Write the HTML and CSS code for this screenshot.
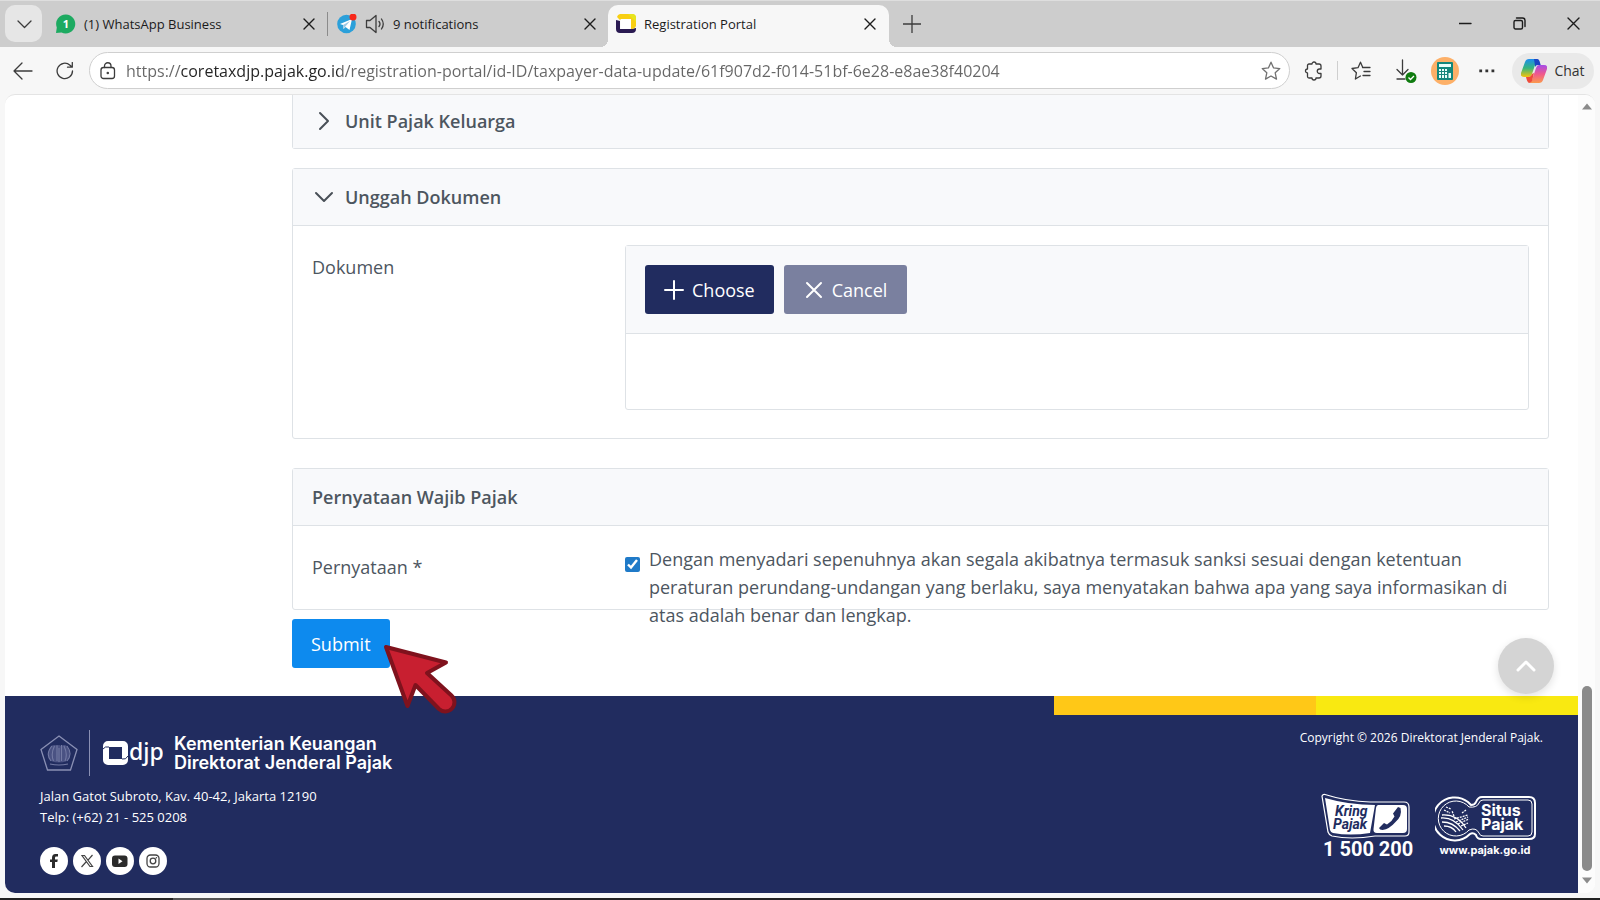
FILE: index.html
```html
<!DOCTYPE html>
<html lang="id">
<head>
<meta charset="utf-8">
<title>Registration Portal</title>
<link rel="stylesheet" href="styles.css">
</head>
<body>
<div class="browser">
  <header class="tabstrip">
    <button class="tab-list" aria-label="Tab actions"><svg width="18" height="18" viewBox="0 0 18 18"><path class="line" d="M3 6l6.500 6.500L16 6"/></svg></button>
    <div class="tab">
      <svg width="20" height="20" viewBox="0 0 20 20"><path fill="#1daa61" d="M10 0.500a9.500 9.500 0 1 1-4.500 18L0 19l.8-5.500A9.500 9.500 0 0 1 10 .5z"/><text x="10" y="14" text-anchor="middle" class="badge-num">1</text></svg>
      <span class="tab-title">(1) WhatsApp Business</span>
      <button class="close" aria-label="Close tab"><svg width="12" height="12" viewBox="0 0 12 12"><path class="line dark" d="M1 1l10 10M11 1L1 11"/></svg></button>
    </div>
    <span class="tab-sep"></span>
    <div class="tab tab-two">
      <svg width="20" height="20" viewBox="0 0 20 20"><circle cx="9.500" cy="10" r="9.300" fill="#2ba0da"/><path fill="#fff" d="M3 10l12-5-2.500 11-4-3-2 2-.5-4z"/><path fill="#9cc8e4" d="M6 11l7-4-5 6-1.500 2z"/><circle cx="16" cy="3" r="3.500" fill="#f7281b"/></svg>
      <svg class="speaker" width="20" height="20" viewBox="0 0 20 20"><path class="line" d="M1.500 6.500h3.500l6-5v17l-6-5H1.500zM14 7.500q2 2.500 0 5M16.500 5q3.500 5 0 10"/></svg>
      <span class="tab-title">9 notifications</span>
      <button class="close" aria-label="Close tab"><svg width="12" height="12" viewBox="0 0 12 12"><path class="line dark" d="M1 1l10 10M11 1L1 11"/></svg></button>
    </div>
    <div class="tab active">
      <svg width="20" height="20" viewBox="0 0 20 20"><path fill="#2a1a52" d="M0 6l4 1v8h11l5-1v1a4 4 0 0 1-4 4H4a4 4 0 0 1-4-4z"/><path fill="#f8cf13" d="M1 3a4 4 0 0 1 3-3h12a4 4 0 0 1 4 4v8q-1 3-5 3V6H4z"/><path fill="#e6e51e" d="M12 0h4a4 4 0 0 1 4 4v4l-4-4z"/><rect x="4.500" y="5" width="10.500" height="10" fill="#fff"/></svg>
      <span class="tab-title">Registration Portal</span>
      <button class="close" aria-label="Close tab"><svg width="12" height="12" viewBox="0 0 12 12"><path class="line dark" d="M1 1l10 10M11 1L1 11"/></svg></button>
    </div>
    <button class="new-tab" aria-label="New tab"><svg width="18" height="18" viewBox="0 0 18 18"><path class="line" d="M9 0v18M0 9h18"/></svg></button>
    <div class="window-controls">
      <button aria-label="Minimize"><svg width="13" height="13" viewBox="0 0 13 13"><path class="line dark" d="M0 6.500h12"/></svg></button>
      <button aria-label="Restore"><svg width="13" height="13" viewBox="0 0 13 13"><rect class="line dark" x="1" y="3.500" width="8.500" height="8.500" rx="1.500"/><path class="line dark" d="M3.500 1h6q2.500 0 2.500 2.500v6"/></svg></button>
      <button aria-label="Close"><svg width="13" height="13" viewBox="0 0 13 13"><path class="line dark" d="M1 1l11 11M12 1L1 12"/></svg></button>
    </div>
  </header>

  <nav class="toolbar">
    <button class="nav-btn" aria-label="Back"><svg width="20" height="18" viewBox="0 0 20 18"><path class="line" d="M19 9H1M9 1L1 9l8 8"/></svg></button>
    <button class="nav-btn" aria-label="Refresh"><svg width="18" height="18" viewBox="0 0 18 18"><path class="line" d="M16.500 9A7.700 7.700 0 1 1 14 3.200L16 5M16.300 0.500V5.200H11.500"/></svg></button>
    <div class="address">
      <svg width="16" height="18" viewBox="0 0 16 18"><rect class="line" x="1" y="5.500" width="13.500" height="11" rx="2.500"/><path class="line" d="M4.500 5.500V4a3.200 3.200 0 0 1 6.500 0v1.500"/><circle cx="7.800" cy="11" r="1.300" fill="#444"/></svg>
      <input class="url" type="text" aria-label="Address" value="https://coretaxdjp.pajak.go.id/registration-portal/id-ID/taxpayer-data-update/61f907d2-f014-51bf-6e28-e8ae38f40204">
      <button class="tool" aria-label="Favorite"><svg width="20" height="20" viewBox="0 0 20 20"><path class="line soft" d="M10 1.200l2.600 5.700 6.200.7-4.600 4.200 1.300 6.300L10 15l-5.500 3.100 1.300-6.300L1.200 7.600l6.200-.7z"/></svg></button>
    </div>
    <div class="tools">
      <button class="tool" aria-label="Extensions"><svg width="20" height="20" viewBox="0 0 20 20"><path class="line" d="M3.500 4.500a1.500 1.500 0 0 1 1.500-1.500h3a2 2 0 1 1 4 0h3a2 2 0 0 1 2 2v3h-1.500a2.200 2.200 0 0 0 0 4.500H17V15a2 2 0 0 1-2 2h-3a2 2 0 1 1-4 0H5a1.500 1.500 0 0 1-1.500-1.500V12a2 2 0 1 1 0-4z"/></svg></button>
      <span class="tool-sep"></span>
      <button class="tool" aria-label="Favorites"><svg width="20" height="20" viewBox="0 0 20 20"><path class="line" d="M13 6.500h-1.200L9.500 1.200 7 6.700l-6 .8 4.400 4.200-1 6.300 5-3M11.500 6.500H19M13 10.500h6M12 14.500h7"/></svg></button>
      <button class="tool download" aria-label="Downloads"><svg width="24" height="24" viewBox="0 0 24 24"><path class="line" d="M8.500 1v15M3 10.500l5.500 5.500 5.500-5.500M3 20h8"/><circle cx="17" cy="18.500" r="5.500" fill="#0f7b0f"/><path d="M14.500 18.500l2 2 3.500-3.500" fill="none" stroke="#fff" stroke-width="1.300"/></svg></button>
      <button class="tool" aria-label="Profile"><svg width="28" height="28" viewBox="0 0 28 28"><circle cx="14" cy="14" r="14" fill="#fdb068"/><rect x="6" y="5" width="16" height="18" rx="1" fill="#13877c"/><path fill="#e8fffa" d="M8 7h12v3H8zM8 12h2v2H8zM11 12h2v2h-2zM14 12h2v2h-2zM8 15h2v2H8zM11 15h2v2h-2zM14 15h2v2h-2zM8 18h2v3H8zM11 18h2v3h-2zM14 18h2v3h-2zM17.500 16h2.500v5h-2.500z"/></svg></button>
      <button class="tool more" aria-label="Settings"><svg width="16" height="4" viewBox="0 0 16 4"><path fill="#333" d="M.3.500h2.800v2.800H.3zM6.400.5h2.800v2.800H6.400zM12.500.5h2.800v2.800h-2.800z"/></svg></button>
      <button class="chat"><svg width="26" height="24" viewBox="0 0 26 24"><defs><linearGradient id="ca" x1="0" y1="0" x2="0" y2="1"><stop offset="0" stop-color="#1b8df0"/><stop offset=".5" stop-color="#35b57d"/><stop offset="1" stop-color="#f6c40a"/></linearGradient><linearGradient id="cb" x1="0" y1="0" x2="0" y2="1"><stop offset="0" stop-color="#a54be8"/><stop offset=".5" stop-color="#f0588d"/><stop offset="1" stop-color="#fb9a4c"/></linearGradient></defs><path fill="url(#ca)" d="M8 0h9l-2 3-4 12q-1 3-4 3H3q-4 0-3-4L4 3q1-3 4-3z"/><path fill="#1b45c4" d="M13 0h3q2 0 2.500 2l1.200 4h-3q-2 0-2.500 2z"/><path fill="url(#cb)" d="M18 6h5q4 0 3 4l-4 11q-1 3-4 3H9l2-3 4-12q1-3 3-3z"/><path fill="#ee4b3a" d="M7 18q3 0 4-3l2-1-2 8q-1 2-3 2-2-1-3-6z"/></svg>Chat</button>
    </div>
  </nav>

  <div class="viewport">
    <div class="page">
      <main class="content">
        <section class="card card-cut">
          <h2 class="card-head"><svg width="20" height="20" viewBox="0 0 20 20"><path class="chev" d="M6 2l8 8-8 8"/></svg>Unit Pajak Keluarga</h2>
        </section>

        <section class="card card-docs">
          <h2 class="card-head"><svg width="20" height="20" viewBox="0 0 20 20"><path class="chev" d="M2 6l8 8 8-8"/></svg>Unggah Dokumen</h2>
          <div class="card-body">
            <span class="field-label">Dokumen</span>
            <div class="upload">
              <div class="upload-bar">
                <button class="btn navy"><svg width="20" height="20" viewBox="0 0 20 20"><path d="M10 1v18M1 10h18"/></svg>Choose</button>
                <button class="btn muted"><svg width="20" height="20" viewBox="0 0 20 20"><path d="M3 3l14 14M17 3L3 17"/></svg>Cancel</button>
              </div>
              <div class="upload-drop"></div>
            </div>
          </div>
        </section>

        <section class="card card-statement">
          <h2 class="card-head">Pernyataan Wajib Pajak</h2>
          <div class="card-body">
            <span class="field-label">Pernyataan *</span>
            <div class="agree">
              <input type="checkbox" id="agree" checked>
              <label for="agree">Dengan menyadari sepenuhnya akan segala akibatnya termasuk sanksi sesuai dengan ketentuan peraturan perundang-undangan yang berlaku, saya menyatakan bahwa apa yang saya informasikan di atas adalah benar dan lengkap.</label>
            </div>
          </div>
        </section>

        <div class="submit-row">
          <button class="btn blue">Submit</button>
          <svg class="pointer" width="74" height="70" viewBox="0 0 74 70"><path d="M3 3L63 18.500 44 29l24.500 22.500a9 9 0 0 1-12.500 13.500L32.500 41l-8 21z"/></svg>
        </div>
        <button class="to-top" aria-label="Scroll to top"><svg width="20" height="12" viewBox="0 0 20 12"><path d="M2 10l8-8 8 8"/></svg></button>
      </main>

      <footer class="footer">
        <div class="stripes"><span class="orange"></span><span class="yellow"></span></div>
        <div class="footer-main">
          <div class="org">
            <div class="brand">
              <svg width="38" height="36" viewBox="0 0 38 36"><path fill="none" stroke="#8a90b4" stroke-width="1.300" d="M19 1l18 13.500L30.500 35h-23L1 14.500z"/><path fill="#4a5283" d="M11 11q4-2 6 0 2-2 4 0 3-2 6 0 5 8 0 15-8 3-16 0-5-7 0-15z"/><path fill="none" stroke="#737aa4" stroke-width="1.100" d="M12 11q-7 8-1 15M14.500 11q-4 8-1 15M17 10v16M19 13v14M21.500 10v16M24 11q4 8 1 15M27 11q6 8 0 15M10 29q9 2 18 0"/></svg>
              <span class="brand-line"></span>
              <svg width="60" height="34" viewBox="0 0 60 34"><path fill="#fff" fill-rule="evenodd" d="M5 5h15a5 5 0 0 1 5 5v14a5 5 0 0 1-5 5H5a5 5 0 0 1-5-5V10a5 5 0 0 1 5-5zM6 11v12h13V11z"/><path fill="none" stroke="#222d5f" d="M0 13q2-3 6-2M25 20q-2 4-6 3"/><text class="djp" x="26" y="24">djp</text></svg>
              <strong class="org-name">Kementerian Keuangan<br>Direktorat Jenderal Pajak</strong>
            </div>
            <address>Jalan Gatot Subroto, Kav. 40-42, Jakarta 12190<br>Telp: (+62) 21 - 525 0208</address>
            <div class="social">
              <a href="#" aria-label="Facebook"><svg width="14" height="14" viewBox="0 0 14 14"><path fill="#2b2b2b" d="M5 14V8H3V5.500h2V4q0-4 3.500-4H11v2.500H9.300Q8 2.500 8 3.800v1.700h2.800L10.300 8H8v6z"/></svg></a>
              <a href="#" aria-label="X"><svg width="14" height="14" viewBox="0 0 14 14"><path fill="none" stroke="#444" stroke-width="1.200" d="M2 1.500h2.500l8 11H10zM12.500 1L8 6.200M6 8L1.500 13"/></svg></a>
              <a href="#" aria-label="YouTube"><svg width="16" height="14" viewBox="0 0 16 14"><rect y="1.500" width="15.500" height="11.500" rx="3" fill="#2b2b2b"/><path fill="#fff" d="M6.500 4.500l4 2.700-4 2.700z"/></svg></a>
              <a href="#" aria-label="Instagram"><svg width="14" height="14" viewBox="0 0 14 14"><g fill="none" stroke="#444" stroke-width="1.300"><rect x="1" y="1" width="12" height="12" rx="3.500"/><circle cx="7" cy="7" r="2.800"/></g><circle cx="10.400" cy="3.700" r=".8" fill="#444"/></svg></a>
            </div>
          </div>
          <div class="legal">
            <small>Copyright © 2026 Direktorat Jenderal Pajak.</small>
            <div class="partners">
              <svg width="92" height="68" viewBox="0 0 92 68"><path fill="none" stroke="#fff" stroke-width="1.200" d="M1 3q1-2 3-1.500Q26 8.500 49 9h34q5 0 5 5v25q0 4-4 4H54q-24 4-43 0-3-1-4-4z"/><path fill="#fff" d="M4 5q24 7 50 7l-5 28q-20 3-37 0-2 0-3-3zM57.500 12H82q4 0 4 4v20q0 4-4 4H56q-4 0-3.500-4L55 15q.5-3 2.500-3z"/><path fill="#222d5f" d="M77 14l2.500 1q2 8-5 14-6 7-13 8-3 0-3.500-2l5-5 3 1.500q5-3 7.500-8l-1.500-3z"/><text class="kring" x="14" y="23">Kring</text><text class="kring" x="12" y="36">Pajak</text><text class="phone" x="2" y="63">1 500 200</text></svg>
              <svg width="102" height="66" viewBox="0 -3 102 66"><path fill="none" stroke="#fff" stroke-width="2" d="M36 9q4 0 5-3 2-5 6-5h47q6 0 6 6v31q0 5-6 5H46q-4 0-5-4-3-3-6-1A21.500 21.500 0 1 1 33 6z"/><path fill="none" stroke="#fff" stroke-width="1" d="M34 11q8 1 10-4 1-3 4-3h45q4 0 4 4v28q0 4-4 4H48q-3 0-4-3-3-6-10-3A17.500 17.500 0 1 1 34 11z"/><g fill="none" stroke="#fff" stroke-width="1.300"><path d="M7 19q15-1 24 13M6 22q13-1 22 12M7 26q11 0 18 9M9 30q8 0 12 6"/><path d="M19 23l14-4M21 26l12-5M23 28l11-5M26 30l7-3M19 20l-2-5M27 17l4-3M9 14l6 3M11 11l5 2" stroke-dasharray="2 1"/></g><text class="situs" x="46" y="20">Situs</text><text class="situs" x="46" y="34">Pajak</text><text class="site" x="50" y="58" text-anchor="middle">www.pajak.go.id</text></svg>
            </div>
          </div>
        </div>
      </footer>
    </div>
    <div class="scrollbar">
      <svg width="12" height="7" viewBox="0 0 12 7"><path fill="#8b8b8b" d="M1 6.500L6 .5l5 6z"/></svg>
      <span class="thumb"></span>
      <svg width="12" height="7" viewBox="0 0 12 7"><path fill="#8b8b8b" d="M1 .5l5 6 5-6z"/></svg>
    </div>
  </div>
  <div class="taskbar"></div>
</div>
</body>
</html>
```
FILE: styles.css
```css
* { box-sizing: border-box; }
body {
  margin: 0;
  font-family: "Open Sans", "Noto Sans", sans-serif;
  color: #4d565f;
  background: #f7f7f7;
}
button, input { font: inherit; color: inherit; }
button { border: 0; padding: 0; background: none; display: inline-flex; align-items: center; justify-content: center; }
svg { flex: none; display: block; }
.line { fill: none; stroke: #3c3c3c; stroke-width: 1.300; stroke-linejoin: round; stroke-linecap: round; }
.dark { stroke: #1c1c1c; stroke-width: 1.400; }
.soft { stroke: #707070; }

.browser { display: flex; flex-direction: column; height: 100vh; }

.tabstrip {
  display: flex;
  align-items: flex-start;
  height: 47px;
  padding: 4px 0 0 5px;
  background: #cdcdcd;
  border-top: 1px solid #dedede;
  font-size: 13px;
  color: #1b1b1b;
}
.tab-list { width: 37px; height: 37px; border-radius: 10px; background: #e6e6e6; }
.tab { display: flex; align-items: center; width: 280px; height: 37px; padding: 0 12px 0 9px; margin-left: 5px; }
.tab-title { flex: 1; margin-left: 8px; white-space: nowrap; }
.tab-sep { width: 1px; height: 24px; margin: 7px 0 0; background: #8b8b8b; }
.tab-two { margin-left: 0; }
.speaker { margin-left: 8px; }
.active {
  position: relative;
  width: 281px;
  height: 42px;
  margin-left: 0;
  padding: 0 13px 5px 8px;
  border-radius: 10px 10px 0 0;
  background: #f7f7f7;
}
.active::before, .active::after {
  content: "";
  position: absolute;
  bottom: 0;
  width: 8px;
  height: 8px;
}
.active::before { left: -8px; background: radial-gradient(circle at 0 0, #cdcdcd 8px, #f7f7f7 8px); }
.active::after { right: -8px; background: radial-gradient(circle at 100% 0, #cdcdcd 8px, #f7f7f7 8px); }
.new-tab { width: 46px; height: 37px; }
.window-controls { display: flex; margin-left: auto; }
.window-controls button { width: 54px; height: 37px; }
.badge-num { font: 700 11px "Open Sans", sans-serif; fill: #fff; }

.toolbar { display: flex; align-items: center; height: 47px; padding: 0 6px 0 2px; }
.nav-btn { width: 42px; height: 36px; }
.address {
  flex: 1;
  display: flex;
  align-items: center;
  height: 37px;
  margin-left: 3px;
  padding-left: 10px;
  border: 1px solid #cfcfcf;
  border-radius: 19px;
  background: #fff;
}
.url {
  flex: 1;
  min-width: 0;
  margin-left: 10px;
  padding: 0;
  border: 0;
  outline: 0;
  font-size: 16px;
  color: #555;
  background: linear-gradient(90deg, #666 54px, #222 54px 213px, #666 213px);
  background-clip: text;
  -webkit-background-clip: text;
  -webkit-text-fill-color: transparent;
}
.tools { display: flex; align-items: center; margin-left: 6px; }
.tool { width: 36px; height: 36px; }
.tool-sep { width: 1px; height: 19px; margin: 0 5px; background: #cfcfcf; }
.download { margin: 0 3px 0 9px; }
.more { margin: 0 7px 0 6px; }
.chat { width: 82px; height: 36px; gap: 7px; border-radius: 18px; background: #e9e9e9; font-size: 14px; color: #333; }

.viewport {
  flex: 1;
  min-height: 0;
  display: flex;
  margin: 0 5px;
  border-top: 1px solid #e4e4e4;
  border-radius: 10px;
  background: #fff;
  overflow: hidden;
}
.page { flex: 1; display: flex; flex-direction: column; justify-content: space-between; }
.content { position: relative; padding: 0 29px 0 287px; font-size: 18px; line-height: 28px; }

.card { border: 1px solid #dee2e6; border-radius: 3px; }
.card-cut { border-top: 0; border-radius: 0 0 3px 3px; margin-bottom: 19px; }
.card-head {
  display: flex;
  align-items: center;
  gap: 11px;
  height: 57px;
  margin: 0;
  padding: 0 19px 1px;
  font-size: 18px;
  font-weight: 600;
  background: #f8f9fb;
  border-bottom: 1px solid #dee2e6;
}
.card-head svg { margin-left: 2px; }
.card-cut .card-head { height: 53px; border: 0; }
.chev { fill: none; stroke: #495057; stroke-width: 2; stroke-linecap: round; stroke-linejoin: round; }
.card-body { display: grid; grid-template-columns: 313px 1fr; padding: 19px; }
.card-docs .card-body { padding-bottom: 28px; }
.card-docs { margin-bottom: 29px; }
.field-label { padding-top: 8px; }
.upload { border: 1px solid #dee2e6; border-radius: 3px; }
.upload-bar { display: flex; gap: 10px; padding: 19px; background: #f8f9fb; border-bottom: 1px solid #dee2e6; }
.upload-drop { height: 75px; }
.btn { height: 49px; padding: 0 20px; gap: 8px; border-radius: 3px; color: #fff; font-size: 18px; }
.btn svg path { fill: none; stroke: #fff; stroke-width: 2; stroke-linecap: round; }
.navy { padding: 0 19px; background: #212c5f; }
.muted { background: #7a809f; }
.blue { padding: 0 19px; background: #0d8aee; }

/* The statement is taller than its card and runs past the lower border */
.card-statement { height: 142px; margin-bottom: 9px; }
.agree { display: flex; align-items: flex-start; gap: 9px; }
.agree input { flex: none; width: 15px; height: 15px; margin: 12px 0 0; accent-color: #1f7ac8; }
.agree label { margin-right: 8px; }

.submit-row { position: relative; display: flex; margin-bottom: 28px; }
.pointer { position: absolute; left: 91px; top: 25px; }
.pointer path { fill: #c81f30; stroke: #7f121d; stroke-width: 4; stroke-linejoin: round; }
.to-top {
  position: absolute;
  right: 24px;
  bottom: 2px;
  width: 56px;
  height: 56px;
  border-radius: 50%;
  background: #d4d4d4;
  box-shadow: 0 3px 8px rgba(0, 0, 0, .12);
}
.to-top path { fill: none; stroke: #fff; stroke-width: 3; stroke-linecap: round; stroke-linejoin: round; }

.footer { flex: 1; background: #212c5f; color: #fff; }
.stripes { display: grid; grid-template-columns: 4fr 1fr 1fr; height: 19px; }
.orange { grid-column: 2; background: #ffc817; }
.yellow { background: #f9e911; }
.footer-main { display: flex; justify-content: space-between; padding: 14px 35px 0; font-size: 13px; }
.brand { display: flex; align-items: center; height: 48px; }
.brand-line { width: 1px; height: 46px; margin: 0 13px 0 11px; background: #8a90b4; }
.djp { font: 500 23px "Noto Sans", sans-serif; fill: #fff; }
.org-name { margin-left: 11px; font: 600 18px/19px Inter, sans-serif; }
.footer address { margin-top: 9px; font-style: normal; line-height: 21px; }
.social { display: flex; gap: 5px; margin-top: 19px; }
.social a { display: flex; align-items: center; justify-content: center; width: 28px; height: 28px; border-radius: 50%; background: #fff; }
.legal { display: flex; flex-direction: column; align-items: flex-end; }
.legal small { font-size: 12px; line-height: 18px; }
.partners { display: flex; gap: 22px; align-items: flex-start; margin: 46px 6px 0 0; }
.kring { font: italic 700 14px Roboto, sans-serif; fill: #222d5f; }
.phone { font: 700 20px Roboto, sans-serif; fill: #fff; }
.situs { font: 700 16px Inter, sans-serif; fill: #fff; }
.site { font: 700 11px Inter, sans-serif; fill: #fff; }

.scrollbar { display: flex; flex-direction: column; align-items: center; width: 17px; padding: 8px 0 9px; background: #fcfcfc; }
.thumb { width: 10px; height: 185px; margin: auto 0 6px; border-radius: 5px; background: #8b8b8b; }
.taskbar { height: 2px; margin-top: 5px; background: linear-gradient(90deg, #222 173px, #555 173px 230px, #222 230px); }
```
